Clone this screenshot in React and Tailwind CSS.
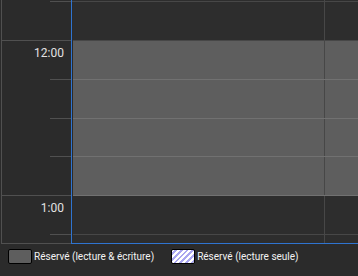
const rows = [
  { h: "h-[39px]", busy: false, label: "" },
  { h: "h-[39px]", busy: true, label: "12:00" },
  { h: "h-[39px]", busy: true, label: "" },
  { h: "h-[38px]", busy: true, label: "" },
  { h: "h-[39px]", busy: true, label: "" },
  { h: "h-[39px]", busy: false, label: "1:00" },
];

// which gutter rows end with a full-width (hour) line
const fullLineAfter = [true, false, false, false, true, false];

function GutterRow({ row, full }) {
  return (
    <div className={`${row.h} flex flex-col`}>
      <div className="flex-1 flex justify-end pr-[7px] pt-[5px] text-[12px] leading-[14px] text-[#e2e2e2]">
        {row.label}
      </div>
      {full ? (
        <div className="h-px bg-[#505050]" />
      ) : (
        <div className="h-px w-[21px] self-end bg-[#505050]" />
      )}
    </div>
  );
}

function DayRow({ row }) {
  const bg = row.busy ? "bg-[#5e5e5e]" : "bg-[#2d2d2d]";
  const line = row.busy ? "border-[#717171]" : "border-[#474747]";
  return (
    <div className={`${row.h} flex border-b ${line}`}>
      <div className={`w-[251px] ${bg}`} />
      <div className={`flex-1 border-l border-[#474747] ${bg}`} />
    </div>
  );
}

export default function App() {
  return (
    <div
      className="w-[358px] h-[276px] bg-[#2b2b2b] flex flex-col overflow-hidden"
      style={{ fontFamily: "Roboto, 'Liberation Sans', sans-serif" }}
    >
      <div className="h-[244px] flex ml-px border-l border-b border-[#505050]">
        <div className="w-[69px] flex flex-col">
          <div className="h-[2px] flex flex-col justify-end">
            <div className="h-px w-[21px] self-end bg-[#505050]" />
          </div>
          {rows.map((r, i) => (
            <GutterRow key={i} row={r} full={fullLineAfter[i]} />
          ))}
        </div>
        <div className="flex-1 flex flex-col border-l border-b border-[#2f74d0] -mb-px">
          <div className="h-[2px] flex border-b border-[#474747]">
            <div className="w-[252px] bg-[#2d2d2d]" />
            <div className="flex-1 border-l border-[#474747] bg-[#2d2d2d]" />
          </div>
          <div className="flex-1 flex flex-col pl-px">
            {rows.map((r, i) => (
              <DayRow key={i} row={r} />
            ))}
            <div className="flex-1 flex">
              <div className="w-[251px] bg-[#2d2d2d]" />
              <div className="flex-1 border-l border-[#474747] bg-[#2d2d2d]" />
            </div>
          </div>
        </div>
      </div>
      <div className="flex items-center pl-[8px] pt-[5px] text-[10px] leading-[15px] text-[#f2f2f2]">
        <div className="w-[24px] h-[15px] rounded-[2px] border border-black bg-[#5e5e5e]" />
        <span className="ml-[2px]">Réservé (lecture &amp; écriture)</span>
        <div
          className="ml-[17px] w-[24px] h-[15px] rounded-[2px] border border-black"
          style={{
            backgroundImage:
              "repeating-linear-gradient(135deg, #ffffff 0px, #ffffff 2px, #a9a6f0 2px, #a9a6f0 4px)",
          }}
        />
        <span className="ml-[2px]">Réservé (lecture seule)</span>
      </div>
    </div>
  );
}
